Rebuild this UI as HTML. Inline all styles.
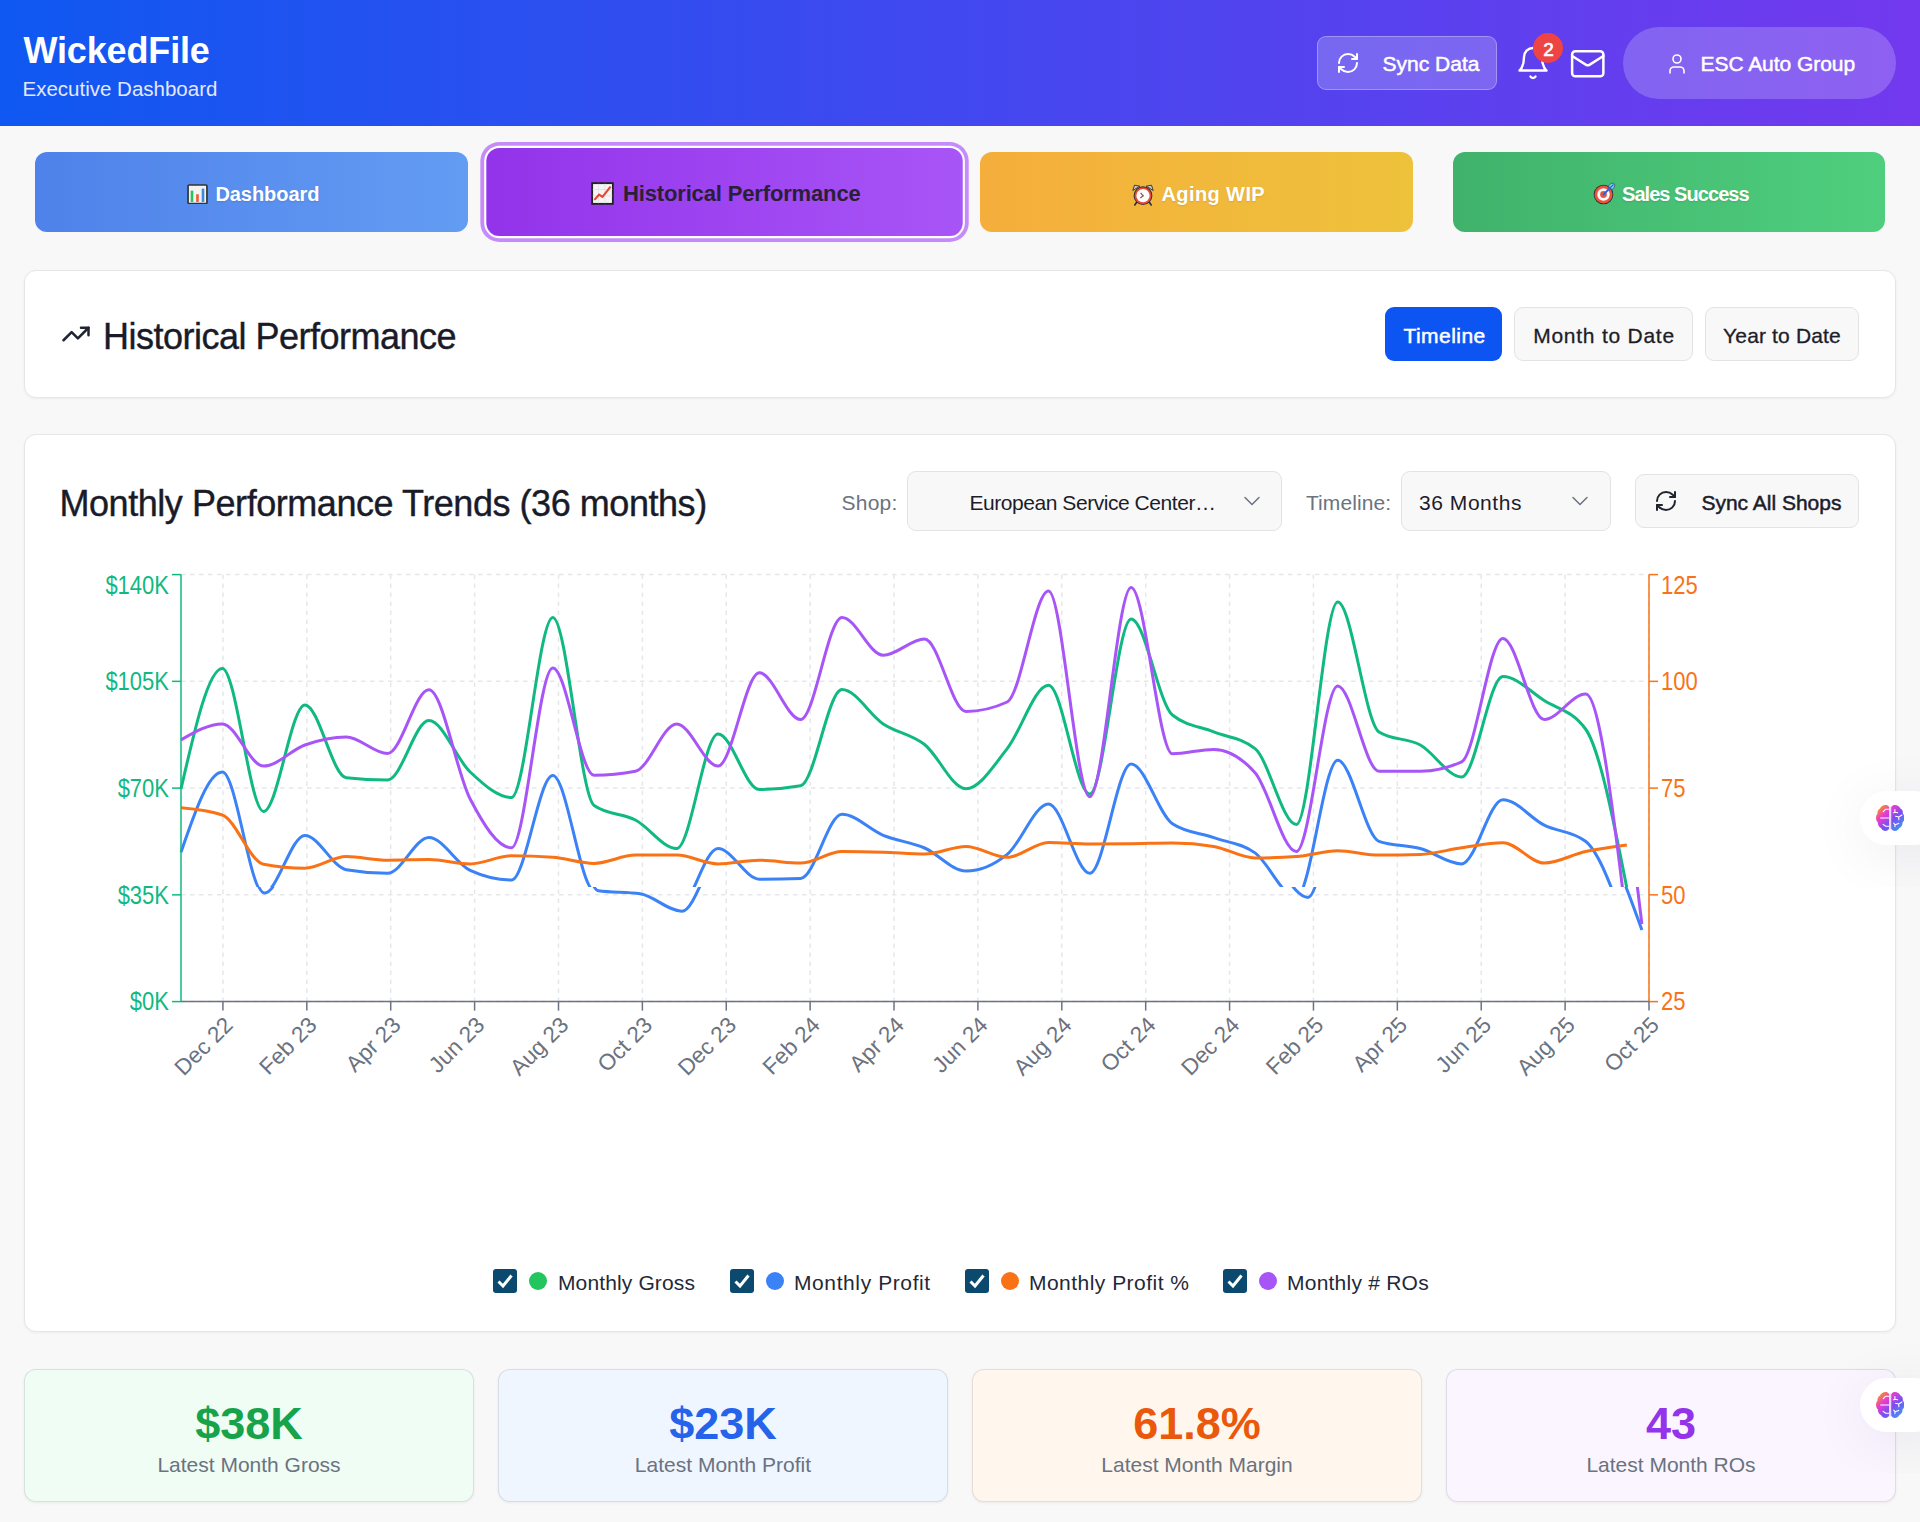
<!DOCTYPE html>
<html><head><meta charset="utf-8">
<style>
*{box-sizing:border-box;margin:0;padding:0}
html,body{width:1920px;height:1522px;overflow:hidden;background:#f8f8f9;font-family:"Liberation Sans",sans-serif;position:relative}
.abs{position:absolute}
.t{position:absolute;white-space:nowrap;line-height:1}
.tk{font-family:"Liberation Sans",sans-serif;font-size:22px}
#hdr{left:0;top:0;width:1920px;height:126px;background:linear-gradient(90deg,#0f58f1 0%,#4248ef 50%,#7339ee 100%)}
.tab{position:absolute;top:152px;width:432.5px;height:80px;border-radius:12px}
.card{position:absolute;left:24px;width:1872px;background:#fff;border:1.5px solid #e6e6e9;border-radius:12px;box-shadow:0 1px 3px rgba(0,0,0,0.05)}
.btn{position:absolute;border-radius:9px;border:1.5px solid #e3e3e6;background:#f8f8f9}
.stat{position:absolute;top:1369px;width:450px;height:133px;border-radius:12px;border:1.5px solid rgba(0,0,20,0.1)!important;box-shadow:0 1px 3px rgba(0,0,0,0.06)}
</style></head>
<body>
<div id="hdr" class="abs"></div>
<div class="t" style="left:23.5px;top:32.5px;font-size:36px;font-weight:700;color:#fff;letter-spacing:-0.15px">WickedFile</div>
<div class="t" style="left:22.5px;top:79px;font-size:20.5px;color:#e3e8ff;letter-spacing:0px">Executive Dashboard</div>

<!-- Sync Data -->
<div class="abs" style="left:1317px;top:36px;width:180px;height:54px;border-radius:9px;background:rgba(255,255,255,0.2);border:1.5px solid rgba(255,255,255,0.3)"></div>
<svg class="abs" style="left:1336px;top:50.5px" width="24" height="24" viewBox="0 0 24 24" fill="none" stroke="#fff" stroke-width="2" stroke-linecap="round" stroke-linejoin="round"><path d="M3 12a9 9 0 0 1 9-9 9.75 9.75 0 0 1 6.74 2.74L21 8"/><path d="M21 3v5h-5"/><path d="M21 12a9 9 0 0 1-9 9 9.75 9.75 0 0 1-6.74-2.74L3 16"/><path d="M8 16H3v5"/></svg>
<div class="t" style="left:1382.5px;top:53px;font-size:21px;color:#fff;letter-spacing:0.02px;-webkit-text-stroke:0.5px #fff">Sync Data</div>
<!-- bell -->
<svg class="abs" style="left:1515px;top:45.2px" width="36" height="36" viewBox="0 0 24 24" fill="none" stroke="#fff" stroke-width="1.6" stroke-linecap="round" stroke-linejoin="round"><path d="M6 8a6 6 0 0 1 12 0c0 7 3 9 3 9H3s3-2 3-9"/><path d="M10.3 21a1.94 1.94 0 0 0 3.4 0"/></svg>
<div class="abs" style="left:1533px;top:33px;width:30px;height:30px;border-radius:50%;background:#ef4444"></div>
<div class="t" style="left:1533.5px;top:39.5px;width:30px;text-align:center;font-size:19px;color:#fff;-webkit-text-stroke:0.6px #fff">2</div>
<!-- mail -->
<svg class="abs" style="left:1568.7px;top:44.6px" width="37.5" height="37.5" viewBox="0 0 24 24" fill="none" stroke="#fff" stroke-width="1.6" stroke-linecap="round" stroke-linejoin="round"><rect width="20" height="16" x="2" y="4" rx="2"/><path d="m22 7-8.97 5.7a1.94 1.94 0 0 1-2.06 0L2 7"/></svg>
<!-- ESC Auto Group -->
<div class="abs" style="left:1623px;top:27px;width:273px;height:72px;border-radius:36px;background:rgba(255,255,255,0.2)"></div>
<svg class="abs" style="left:1665px;top:51.7px" width="24" height="24" viewBox="0 0 24 24" fill="none" stroke="#fff" stroke-width="1.6" stroke-linecap="round" stroke-linejoin="round"><path d="M19 21v-2a4 4 0 0 0-4-4H9a4 4 0 0 0-4 4v2"/><circle cx="12" cy="7" r="4"/></svg>
<div class="t" style="left:1700.5px;top:53px;font-size:21px;color:#fff;letter-spacing:-0.05px;-webkit-text-stroke:0.5px #fff">ESC Auto Group</div>

<!-- Tabs -->
<div class="tab" style="left:35px;background:linear-gradient(90deg,#4f82ea,#639cf3)"></div>
<svg class="abs" style="left:187px;top:183.7px" width="21" height="20.5" viewBox="0 0 20 20" preserveAspectRatio="none"><rect x="1" y="1" width="18" height="18" rx="1" fill="#f3f3f3" stroke="#333" stroke-width="1.6"/><rect x="3.5" y="6.5" width="2.5" height="11" fill="#22c55e"/><rect x="8.7" y="10" width="2.5" height="7.5" fill="#ef5a3c"/><rect x="14" y="4.5" width="2.5" height="13" fill="#3b8be0"/></svg>
<div class="t" style="left:215.4px;top:184px;font-size:20px;font-weight:700;color:#fff;letter-spacing:-0.05px;text-shadow:0 1px 2px rgba(0,0,0,0.1)">Dashboard</div>

<div class="tab" style="left:507.5px;transform:scale(1.1);background:linear-gradient(90deg,#9333ea,#a855f7);box-shadow:0 0 0 2px #fff,0 0 0 5.5px #c58bfa"></div>
<svg class="abs" style="left:591px;top:181.5px" width="23" height="23" viewBox="0 0 20 20"><rect x="1" y="1" width="18" height="18" fill="#f5f5f5" stroke="#222" stroke-width="1.6"/><path d="M1.5 6.5H18.5M1.5 12H18.5M6.5 1.5V18.5M12 1.5V18.5" stroke="#ddd" stroke-width="0.6"/><path d="M3 15.5 L7 11 L10 13 L17 4" stroke="#e8442e" stroke-width="1.8" fill="none"/></svg>
<div class="t" style="left:623px;top:183px;font-size:22px;font-weight:700;color:#2a2036;letter-spacing:-0.15px">Historical Performance</div>

<div class="tab" style="left:980px;background:linear-gradient(90deg,#f5ae3b,#eec23b)"></div>
<svg class="abs" style="left:1132px;top:184px" width="22" height="22" viewBox="0 0 22 22"><path d="M0.8 6.5 L2.5 1.2 L7.8 2.2 Z" fill="#c6cbd2" stroke="#2d2d38" stroke-width="0.9" stroke-linejoin="round"/><path d="M21.2 6.5 L19.5 1.2 L14.2 2.2 Z" fill="#c6cbd2" stroke="#2d2d38" stroke-width="0.9" stroke-linejoin="round"/><path d="M4.5 18.5 L2.8 21 M17.5 18.5 L19.2 21" stroke="#2d2d38" stroke-width="1.6" stroke-linecap="round"/><circle cx="11" cy="11.7" r="9.4" fill="#2d2d38"/><circle cx="11" cy="11.7" r="8.5" fill="#ea4a35"/><circle cx="11" cy="11.7" r="6.6" fill="#fdfdfd"/><path d="M8.6 8.8 L11 11.7 L8.4 14.2" stroke="#4b5563" stroke-width="1.1" fill="none"/><circle cx="11" cy="11.7" r="0.9" fill="#ea4a35"/></svg>
<div class="t" style="left:1161.5px;top:184px;font-size:20px;font-weight:700;color:#fff;letter-spacing:0.4px;text-shadow:0 1px 2px rgba(0,0,0,0.1)">Aging WIP</div>

<div class="tab" style="left:1452.5px;background:linear-gradient(90deg,#40b26b,#4fcf7e)"></div>
<svg class="abs" style="left:1593px;top:182px" width="23" height="23" viewBox="0 0 23 23"><circle cx="10.5" cy="12.5" r="9.8" fill="#2d2d38"/><circle cx="10.5" cy="12.5" r="9" fill="#ea553a"/><circle cx="10.5" cy="12.5" r="6.2" fill="#fff"/><circle cx="10.5" cy="12.5" r="3.4" fill="#ea553a"/><path d="M10.5 12.5 L18.5 4.5" stroke="#2563eb" stroke-width="1.8" stroke-linecap="round"/><path d="M15.5 4.2 C16.5 2 19.5 0.5 21.3 1.7 C22.5 3.5 21 6.5 18.8 7.5 Z" fill="#7dd3fc" stroke="#2d2d38" stroke-width="0.6"/><path d="M17 6 L20.5 2.5" stroke="#2563eb" stroke-width="1.2"/></svg>
<div class="t" style="left:1622px;top:184px;font-size:20px;font-weight:700;color:#fff;letter-spacing:-0.95px;text-shadow:0 1px 2px rgba(0,0,0,0.1)">Sales Success</div>

<!-- Card 1 -->
<div class="card" style="top:270px;height:128px"></div>
<svg class="abs" style="left:60.75px;top:318.8px" width="30" height="30" viewBox="0 0 24 24" fill="none" stroke="#1f2430" stroke-width="2" stroke-linecap="round" stroke-linejoin="round"><polyline points="22 7 13.5 15.5 8.5 10.5 2 17"/><polyline points="16 7 22 7 22 13"/></svg>
<div class="t" style="left:103px;top:319px;font-size:36px;color:#1a1b29;letter-spacing:-0.5px;-webkit-text-stroke:0.4px #1a1b29">Historical Performance</div>
<div class="abs" style="left:1385px;top:307px;width:116.5px;height:54px;border-radius:9px;background:#0d55f2"></div>
<div class="t" style="left:1403.5px;top:324.5px;font-size:21px;color:#fff;letter-spacing:0.45px;-webkit-text-stroke:0.5px #fff">Timeline</div>
<div class="btn" style="left:1514px;top:307px;width:179px;height:54px"></div>
<div class="t" style="left:1533.2px;top:324.5px;font-size:21px;color:#1d1d29;letter-spacing:0.75px;-webkit-text-stroke:0.3px #1d1d29">Month to Date</div>
<div class="btn" style="left:1705px;top:307px;width:154px;height:54px"></div>
<div class="t" style="left:1723.1px;top:324.5px;font-size:21px;color:#1d1d29;letter-spacing:0.15px;-webkit-text-stroke:0.3px #1d1d29">Year to Date</div>

<!-- Card 2 -->
<div class="card" style="top:434px;height:898px"></div>
<div class="t" style="left:59.5px;top:486px;font-size:36px;color:#1a1b29;letter-spacing:-0.45px;-webkit-text-stroke:0.4px #1a1b29">Monthly Performance Trends (36 months)</div>
<div class="t" style="left:841.5px;top:492px;font-size:21px;color:#6b7280;letter-spacing:0.25px">Shop:</div>
<div class="btn" style="left:907px;top:471px;width:375px;height:60px"></div>
<div class="t" style="left:969.5px;top:492px;font-size:21px;color:#1d1d29;letter-spacing:-0.45px">European Service Center…</div>
<svg class="abs" style="left:1239.5px;top:488.7px" width="24" height="24" viewBox="0 0 24 24" fill="none" stroke="#6b7280" stroke-width="1.5" stroke-linecap="round" stroke-linejoin="round"><path d="m5 8.5 7 7 7-7"/></svg>
<div class="t" style="left:1306px;top:492px;font-size:21px;color:#6b7280;letter-spacing:0.07px">Timeline:</div>
<div class="btn" style="left:1401px;top:471px;width:210px;height:60px"></div>
<div class="t" style="left:1419px;top:492px;font-size:21px;color:#1d1d29;letter-spacing:0.55px">36 Months</div>
<svg class="abs" style="left:1567.7px;top:488.7px" width="24" height="24" viewBox="0 0 24 24" fill="none" stroke="#6b7280" stroke-width="1.5" stroke-linecap="round" stroke-linejoin="round"><path d="m5 8.5 7 7 7-7"/></svg>
<div class="btn" style="left:1635px;top:474px;width:224px;height:54px"></div>
<svg class="abs" style="left:1654px;top:488.7px" width="24" height="24" viewBox="0 0 24 24" fill="none" stroke="#1f2430" stroke-width="2" stroke-linecap="round" stroke-linejoin="round"><path d="M3 12a9 9 0 0 1 9-9 9.75 9.75 0 0 1 6.74 2.74L21 8"/><path d="M21 3v5h-5"/><path d="M21 12a9 9 0 0 1-9 9 9.75 9.75 0 0 1-6.74-2.74L3 16"/><path d="M8 16H3v5"/></svg>
<div class="t" style="left:1701.4px;top:492px;font-size:21px;color:#1d1d29;letter-spacing:0px;-webkit-text-stroke:0.5px #1d1d29">Sync All Shops</div>

<svg width="1920" height="1522" style="position:absolute;left:0;top:0">
<defs><clipPath id="ct"><rect x="0" y="0" width="1920" height="887.0"/></clipPath><clipPath id="cb"><rect x="0" y="887.0" width="1920" height="400"/></clipPath></defs>
<g stroke="#e5e7eb" stroke-width="1.5" stroke-dasharray="4.5 4.5" fill="none"><line x1="181.0" y1="574.60" x2="1649.0" y2="574.60"/><line x1="181.0" y1="681.35" x2="1649.0" y2="681.35"/><line x1="181.0" y1="788.10" x2="1649.0" y2="788.10"/><line x1="181.0" y1="894.85" x2="1649.0" y2="894.85"/><line x1="181.0" y1="1001.60" x2="1649.0" y2="1001.60"/><line x1="222.94" y1="574.6" x2="222.94" y2="1001.6"/><line x1="306.83" y1="574.6" x2="306.83" y2="1001.6"/><line x1="390.71" y1="574.6" x2="390.71" y2="1001.6"/><line x1="474.60" y1="574.6" x2="474.60" y2="1001.6"/><line x1="558.49" y1="574.6" x2="558.49" y2="1001.6"/><line x1="642.37" y1="574.6" x2="642.37" y2="1001.6"/><line x1="726.26" y1="574.6" x2="726.26" y2="1001.6"/><line x1="810.14" y1="574.6" x2="810.14" y2="1001.6"/><line x1="894.03" y1="574.6" x2="894.03" y2="1001.6"/><line x1="977.91" y1="574.6" x2="977.91" y2="1001.6"/><line x1="1061.80" y1="574.6" x2="1061.80" y2="1001.6"/><line x1="1145.69" y1="574.6" x2="1145.69" y2="1001.6"/><line x1="1229.57" y1="574.6" x2="1229.57" y2="1001.6"/><line x1="1313.46" y1="574.6" x2="1313.46" y2="1001.6"/><line x1="1397.34" y1="574.6" x2="1397.34" y2="1001.6"/><line x1="1481.23" y1="574.6" x2="1481.23" y2="1001.6"/><line x1="1565.11" y1="574.6" x2="1565.11" y2="1001.6"/><line x1="1649.00" y1="574.6" x2="1649.00" y2="1001.6"/></g>
<path d="M181.00,789.00C194.77,728.70,208.54,668.40,222.31,668.40C236.08,668.40,249.85,811.40,263.62,811.40C277.39,811.40,291.16,704.90,304.93,704.90C318.70,704.90,332.47,776.33,346.24,777.80C360.01,779.27,373.78,780.00,387.55,780.00C401.32,780.00,415.09,720.60,428.86,720.60C442.63,720.60,456.40,759.18,470.17,772.00C483.94,784.82,497.71,797.50,511.48,797.50C525.25,797.50,539.02,617.40,552.79,617.40C566.56,617.40,580.33,795.83,594.10,805.50C607.87,815.17,621.64,812.83,635.41,820.00C649.18,827.17,662.95,848.50,676.72,848.50C690.49,848.50,704.26,734.00,718.03,734.00C731.80,734.00,745.57,789.50,759.34,789.50C773.11,789.50,786.88,788.27,800.65,785.80C814.42,783.33,828.19,689.60,841.96,689.60C855.73,689.60,869.50,714.75,883.27,723.90C897.04,733.05,910.81,733.68,924.58,744.50C938.35,755.32,952.12,788.80,965.89,788.80C979.66,788.80,993.43,765.87,1007.20,748.60C1020.97,731.33,1034.74,685.20,1048.51,685.20C1062.28,685.20,1076.05,793.90,1089.82,793.90C1103.59,793.90,1117.36,618.90,1131.13,618.90C1144.90,618.90,1158.67,703.73,1172.44,715.00C1186.21,726.27,1199.98,726.30,1213.75,731.90C1227.52,737.50,1241.29,737.47,1255.06,748.60C1268.83,759.73,1282.60,824.50,1296.37,824.50C1310.14,824.50,1323.91,602.10,1337.68,602.10C1351.45,602.10,1365.22,723.33,1378.99,732.00C1392.76,740.67,1406.53,737.50,1420.30,745.00C1434.07,752.50,1447.84,777.00,1461.61,777.00C1475.38,777.00,1489.15,676.50,1502.92,676.50C1516.69,676.50,1530.46,691.75,1544.23,700.50C1558.00,709.25,1571.77,710.00,1585.54,729.00C1599.31,748.00,1613.08,818.00,1626.85,888.00" stroke="#10b981" stroke-width="3" fill="none" clip-path="url(#ct)"/>
<path d="M181.00,852.20C194.77,812.10,208.54,772.00,222.31,772.00C236.08,772.00,249.85,893.00,263.62,893.00C277.39,893.00,291.16,835.40,304.93,835.40C318.70,835.40,332.47,867.30,346.24,869.70C360.01,872.10,373.78,873.30,387.55,873.30C401.32,873.30,415.09,837.60,428.86,837.60C442.63,837.60,456.40,864.00,470.17,870.40C483.94,876.80,497.71,880.00,511.48,880.00C525.25,880.00,539.02,775.60,552.79,775.60C566.56,775.60,580.33,888.80,594.10,890.80C607.87,892.80,621.64,891.80,635.41,893.80C649.18,895.80,662.95,911.20,676.72,911.20C690.49,911.20,704.26,848.50,718.03,848.50C731.80,848.50,745.57,879.20,759.34,879.20C773.11,879.20,786.88,878.93,800.65,878.40C814.42,877.87,828.19,814.30,841.96,814.30C855.73,814.30,869.50,829.78,883.27,835.40C897.04,841.02,910.81,842.05,924.58,848.00C938.35,853.95,952.12,871.10,965.89,871.10C979.66,871.10,993.43,865.53,1007.20,854.40C1020.97,843.27,1034.74,804.10,1048.51,804.10C1062.28,804.10,1076.05,873.30,1089.82,873.30C1103.59,873.30,1117.36,764.00,1131.13,764.00C1144.90,764.00,1158.67,814.52,1172.44,823.75C1186.21,832.98,1199.98,832.74,1213.75,837.60C1227.52,842.46,1241.29,842.93,1255.06,852.90C1268.83,862.87,1282.60,897.40,1296.37,897.40C1310.14,897.40,1323.91,760.30,1337.68,760.30C1351.45,760.30,1365.22,836.50,1378.99,841.30C1392.76,846.10,1406.53,844.73,1420.30,848.50C1434.07,852.27,1447.84,863.90,1461.61,863.90C1475.38,863.90,1489.15,799.70,1502.92,799.70C1516.69,799.70,1530.46,818.27,1544.23,825.20C1558.00,832.13,1571.77,830.57,1585.54,841.30C1599.31,852.03,1613.08,891.02,1626.85,930.00" stroke="#3b82f6" stroke-width="3" fill="none" clip-path="url(#ct)"/>
<path d="M181.00,852.20C194.91,812.10,208.83,772.00,222.74,772.00C236.65,772.00,250.57,893.00,264.48,893.00C278.39,893.00,292.31,835.40,306.22,835.40C320.13,835.40,334.05,867.30,347.96,869.70C361.87,872.10,375.79,873.30,389.70,873.30C403.61,873.30,417.53,837.60,431.44,837.60C445.35,837.60,459.27,864.00,473.18,870.40C487.09,876.80,501.01,880.00,514.92,880.00C528.83,880.00,542.75,775.60,556.66,775.60C570.57,775.60,584.49,888.80,598.40,890.80C612.31,892.80,626.23,891.80,640.14,893.80C654.05,895.80,667.97,911.20,681.88,911.20C695.79,911.20,709.71,848.50,723.62,848.50C737.53,848.50,751.45,879.20,765.36,879.20C779.27,879.20,793.19,878.93,807.10,878.40C821.01,877.87,834.93,814.30,848.84,814.30C862.75,814.30,876.67,829.78,890.58,835.40C904.49,841.02,918.41,842.05,932.32,848.00C946.23,853.95,960.15,871.10,974.06,871.10C987.97,871.10,1001.89,865.53,1015.80,854.40C1029.71,843.27,1043.63,804.10,1057.54,804.10C1071.45,804.10,1085.37,873.30,1099.28,873.30C1113.19,873.30,1127.11,764.00,1141.02,764.00C1154.93,764.00,1168.85,814.52,1182.76,823.75C1196.67,832.98,1210.59,832.74,1224.50,837.60C1238.41,842.46,1252.33,842.93,1266.24,852.90C1280.15,862.87,1294.07,897.40,1307.98,897.40C1321.89,897.40,1335.81,760.30,1349.72,760.30C1363.63,760.30,1377.55,836.50,1391.46,841.30C1405.37,846.10,1419.29,844.73,1433.20,848.50C1447.11,852.27,1461.03,863.90,1474.94,863.90C1488.85,863.90,1502.77,799.70,1516.68,799.70C1530.59,799.70,1544.51,818.27,1558.42,825.20C1572.33,832.13,1586.25,830.57,1600.16,841.30C1614.07,852.03,1627.99,891.02,1641.90,930.00" stroke="#3b82f6" stroke-width="3" fill="none" clip-path="url(#cb)"/>
<path d="M181.00,807.70C194.77,808.92,208.54,810.13,222.31,815.00C236.08,819.87,249.85,861.70,263.62,864.30C277.39,866.90,291.16,868.20,304.93,868.20C318.70,868.20,332.47,856.60,346.24,856.60C360.01,856.60,373.78,860.20,387.55,860.20C401.32,860.20,415.09,859.50,428.86,859.50C442.63,859.50,456.40,863.90,470.17,863.90C483.94,863.90,497.71,855.80,511.48,855.80C525.25,855.80,539.02,856.30,552.79,857.30C566.56,858.30,580.33,863.40,594.10,863.40C607.87,863.40,621.64,855.10,635.41,855.10C649.18,855.10,662.95,855.10,676.72,855.10C690.49,855.10,704.26,863.90,718.03,863.90C731.80,863.90,745.57,860.20,759.34,860.20C773.11,860.20,786.88,863.10,800.65,863.10C814.42,863.10,828.19,851.50,841.96,851.50C855.73,851.50,869.50,851.78,883.27,852.20C897.04,852.62,910.81,854.00,924.58,854.00C938.35,854.00,952.12,846.40,965.89,846.40C979.66,846.40,993.43,857.30,1007.20,857.30C1020.97,857.30,1034.74,842.40,1048.51,842.40C1062.28,842.40,1076.05,843.90,1089.82,843.90C1103.59,843.90,1117.36,843.83,1131.13,843.70C1144.90,843.57,1158.67,843.00,1172.44,843.00C1186.21,843.00,1199.98,844.13,1213.75,846.40C1227.52,848.67,1241.29,858.00,1255.06,858.00C1268.83,858.00,1282.60,857.53,1296.37,856.60C1310.14,855.67,1323.91,850.70,1337.68,850.70C1351.45,850.70,1365.22,855.10,1378.99,855.10C1392.76,855.10,1406.53,854.87,1420.30,854.40C1434.07,853.93,1447.84,849.75,1461.61,847.80C1475.38,845.85,1489.15,842.70,1502.92,842.70C1516.69,842.70,1530.46,863.10,1544.23,863.10C1558.00,863.10,1571.77,854.53,1585.54,851.50C1599.31,848.47,1613.08,846.68,1626.85,844.90" stroke="#f97316" stroke-width="3" fill="none" clip-path="url(#ct)"/>
<path d="M181.00,807.70C194.91,808.92,208.83,810.13,222.74,815.00C236.65,819.87,250.57,861.70,264.48,864.30C278.39,866.90,292.31,868.20,306.22,868.20C320.13,868.20,334.05,856.60,347.96,856.60C361.87,856.60,375.79,860.20,389.70,860.20C403.61,860.20,417.53,859.50,431.44,859.50C445.35,859.50,459.27,863.90,473.18,863.90C487.09,863.90,501.01,855.80,514.92,855.80C528.83,855.80,542.75,856.30,556.66,857.30C570.57,858.30,584.49,863.40,598.40,863.40C612.31,863.40,626.23,855.10,640.14,855.10C654.05,855.10,667.97,855.10,681.88,855.10C695.79,855.10,709.71,863.90,723.62,863.90C737.53,863.90,751.45,860.20,765.36,860.20C779.27,860.20,793.19,863.10,807.10,863.10C821.01,863.10,834.93,851.50,848.84,851.50C862.75,851.50,876.67,851.78,890.58,852.20C904.49,852.62,918.41,854.00,932.32,854.00C946.23,854.00,960.15,846.40,974.06,846.40C987.97,846.40,1001.89,857.30,1015.80,857.30C1029.71,857.30,1043.63,842.40,1057.54,842.40C1071.45,842.40,1085.37,843.90,1099.28,843.90C1113.19,843.90,1127.11,843.83,1141.02,843.70C1154.93,843.57,1168.85,843.00,1182.76,843.00C1196.67,843.00,1210.59,844.13,1224.50,846.40C1238.41,848.67,1252.33,858.00,1266.24,858.00C1280.15,858.00,1294.07,857.53,1307.98,856.60C1321.89,855.67,1335.81,850.70,1349.72,850.70C1363.63,850.70,1377.55,855.10,1391.46,855.10C1405.37,855.10,1419.29,854.87,1433.20,854.40C1447.11,853.93,1461.03,849.75,1474.94,847.80C1488.85,845.85,1502.77,842.70,1516.68,842.70C1530.59,842.70,1544.51,863.10,1558.42,863.10C1572.33,863.10,1586.25,854.53,1600.16,851.50C1614.07,848.47,1627.99,846.68,1641.90,844.90" stroke="#f97316" stroke-width="3" fill="none" clip-path="url(#cb)"/>
<path d="M181.00,739.90C194.77,731.90,208.54,723.90,222.31,723.90C236.08,723.90,249.85,766.10,263.62,766.10C277.39,766.10,291.16,749.85,304.93,745.00C318.70,740.15,332.47,737.00,346.24,737.00C360.01,737.00,373.78,753.50,387.55,753.50C401.32,753.50,415.09,689.80,428.86,689.80C442.63,689.80,456.40,772.67,470.17,799.00C483.94,825.33,497.71,847.80,511.48,847.80C525.25,847.80,539.02,668.00,552.79,668.00C566.56,668.00,580.33,775.30,594.10,775.30C607.87,775.30,621.64,773.93,635.41,771.20C649.18,768.47,662.95,724.00,676.72,724.00C690.49,724.00,704.26,766.10,718.03,766.10C731.80,766.10,745.57,672.80,759.34,672.80C773.11,672.80,786.88,719.50,800.65,719.50C814.42,719.50,828.19,617.40,841.96,617.40C855.73,617.40,869.50,655.30,883.27,655.30C897.04,655.30,910.81,639.00,924.58,639.00C938.35,639.00,952.12,711.50,965.89,711.50C979.66,711.50,993.43,708.33,1007.20,702.00C1020.97,695.67,1034.74,591.10,1048.51,591.10C1062.28,591.10,1076.05,796.80,1089.82,796.80C1103.59,796.80,1117.36,587.50,1131.13,587.50C1144.90,587.50,1158.67,753.80,1172.44,753.80C1186.21,753.80,1199.98,749.40,1213.75,749.40C1227.52,749.40,1241.29,757.17,1255.06,772.70C1268.83,788.23,1282.60,851.50,1296.37,851.50C1310.14,851.50,1323.91,685.90,1337.68,685.90C1351.45,685.90,1365.22,771.20,1378.99,771.20C1392.76,771.20,1406.53,771.20,1420.30,771.20C1434.07,771.20,1447.84,768.07,1461.61,761.80C1475.38,755.53,1489.15,638.50,1502.92,638.50C1516.69,638.50,1530.46,719.50,1544.23,719.50C1558.00,719.50,1571.77,694.00,1585.54,694.00C1599.31,694.00,1613.08,809.00,1626.85,924.00" stroke="#a855f7" stroke-width="3" fill="none" clip-path="url(#ct)"/>
<path d="M181.00,739.90C194.91,731.90,208.83,723.90,222.74,723.90C236.65,723.90,250.57,766.10,264.48,766.10C278.39,766.10,292.31,749.85,306.22,745.00C320.13,740.15,334.05,737.00,347.96,737.00C361.87,737.00,375.79,753.50,389.70,753.50C403.61,753.50,417.53,689.80,431.44,689.80C445.35,689.80,459.27,772.67,473.18,799.00C487.09,825.33,501.01,847.80,514.92,847.80C528.83,847.80,542.75,668.00,556.66,668.00C570.57,668.00,584.49,775.30,598.40,775.30C612.31,775.30,626.23,773.93,640.14,771.20C654.05,768.47,667.97,724.00,681.88,724.00C695.79,724.00,709.71,766.10,723.62,766.10C737.53,766.10,751.45,672.80,765.36,672.80C779.27,672.80,793.19,719.50,807.10,719.50C821.01,719.50,834.93,617.40,848.84,617.40C862.75,617.40,876.67,655.30,890.58,655.30C904.49,655.30,918.41,639.00,932.32,639.00C946.23,639.00,960.15,711.50,974.06,711.50C987.97,711.50,1001.89,708.33,1015.80,702.00C1029.71,695.67,1043.63,591.10,1057.54,591.10C1071.45,591.10,1085.37,796.80,1099.28,796.80C1113.19,796.80,1127.11,587.50,1141.02,587.50C1154.93,587.50,1168.85,753.80,1182.76,753.80C1196.67,753.80,1210.59,749.40,1224.50,749.40C1238.41,749.40,1252.33,757.17,1266.24,772.70C1280.15,788.23,1294.07,851.50,1307.98,851.50C1321.89,851.50,1335.81,685.90,1349.72,685.90C1363.63,685.90,1377.55,771.20,1391.46,771.20C1405.37,771.20,1419.29,771.20,1433.20,771.20C1447.11,771.20,1461.03,768.07,1474.94,761.80C1488.85,755.53,1502.77,638.50,1516.68,638.50C1530.59,638.50,1544.51,719.50,1558.42,719.50C1572.33,719.50,1586.25,694.00,1600.16,694.00C1614.07,694.00,1627.99,809.00,1641.90,924.00" stroke="#a855f7" stroke-width="3" fill="none" clip-path="url(#cb)"/>
<line x1="181.0" y1="574.6" x2="181.0" y2="1001.6" stroke="#10b981" stroke-width="1.5"/><line x1="172.0" y1="574.60" x2="181.0" y2="574.60" stroke="#10b981" stroke-width="1.5"/><text transform="translate(169.0,585.60) scale(1,1.13)" x="0" y="0" dy="0.355em" text-anchor="end" fill="#10b981" class="tk">$140K</text><line x1="172.0" y1="681.35" x2="181.0" y2="681.35" stroke="#10b981" stroke-width="1.5"/><text transform="translate(169.0,681.35) scale(1,1.13)" x="0" y="0" dy="0.355em" text-anchor="end" fill="#10b981" class="tk">$105K</text><line x1="172.0" y1="788.10" x2="181.0" y2="788.10" stroke="#10b981" stroke-width="1.5"/><text transform="translate(169.0,788.10) scale(1,1.13)" x="0" y="0" dy="0.355em" text-anchor="end" fill="#10b981" class="tk">$70K</text><line x1="172.0" y1="894.85" x2="181.0" y2="894.85" stroke="#10b981" stroke-width="1.5"/><text transform="translate(169.0,894.85) scale(1,1.13)" x="0" y="0" dy="0.355em" text-anchor="end" fill="#10b981" class="tk">$35K</text><line x1="172.0" y1="1001.60" x2="181.0" y2="1001.60" stroke="#10b981" stroke-width="1.5"/><text transform="translate(169.0,1001.60) scale(1,1.13)" x="0" y="0" dy="0.355em" text-anchor="end" fill="#10b981" class="tk">$0K</text><line x1="1649.0" y1="574.6" x2="1649.0" y2="1001.6" stroke="#f97316" stroke-width="1.5"/><line x1="1649.0" y1="574.60" x2="1658.0" y2="574.60" stroke="#f97316" stroke-width="1.5"/><text transform="translate(1661.0,585.60) scale(1,1.13)" x="0" y="0" dy="0.355em" text-anchor="start" fill="#f97316" class="tk">125</text><line x1="1649.0" y1="681.35" x2="1658.0" y2="681.35" stroke="#f97316" stroke-width="1.5"/><text transform="translate(1661.0,681.35) scale(1,1.13)" x="0" y="0" dy="0.355em" text-anchor="start" fill="#f97316" class="tk">100</text><line x1="1649.0" y1="788.10" x2="1658.0" y2="788.10" stroke="#f97316" stroke-width="1.5"/><text transform="translate(1661.0,788.10) scale(1,1.13)" x="0" y="0" dy="0.355em" text-anchor="start" fill="#f97316" class="tk">75</text><line x1="1649.0" y1="894.85" x2="1658.0" y2="894.85" stroke="#f97316" stroke-width="1.5"/><text transform="translate(1661.0,894.85) scale(1,1.13)" x="0" y="0" dy="0.355em" text-anchor="start" fill="#f97316" class="tk">50</text><line x1="1649.0" y1="1001.60" x2="1658.0" y2="1001.60" stroke="#f97316" stroke-width="1.5"/><text transform="translate(1661.0,1001.60) scale(1,1.13)" x="0" y="0" dy="0.355em" text-anchor="start" fill="#f97316" class="tk">25</text><line x1="181.0" y1="1001.6" x2="1649.0" y2="1001.6" stroke="#6b7280" stroke-width="1.5"/><line x1="222.94" y1="1001.6" x2="222.94" y2="1010.6" stroke="#6b7280" stroke-width="1.5"/><text x="222.94" y="1015.1" transform="rotate(-45 222.94 1015.1)" text-anchor="end" dy="0.71em" fill="#6b7280" class="tk" style="font-size:22.5px">Dec 22</text><line x1="306.83" y1="1001.6" x2="306.83" y2="1010.6" stroke="#6b7280" stroke-width="1.5"/><text x="306.83" y="1015.1" transform="rotate(-45 306.83 1015.1)" text-anchor="end" dy="0.71em" fill="#6b7280" class="tk" style="font-size:22.5px">Feb 23</text><line x1="390.71" y1="1001.6" x2="390.71" y2="1010.6" stroke="#6b7280" stroke-width="1.5"/><text x="390.71" y="1015.1" transform="rotate(-45 390.71 1015.1)" text-anchor="end" dy="0.71em" fill="#6b7280" class="tk" style="font-size:22.5px">Apr 23</text><line x1="474.60" y1="1001.6" x2="474.60" y2="1010.6" stroke="#6b7280" stroke-width="1.5"/><text x="474.60" y="1015.1" transform="rotate(-45 474.60 1015.1)" text-anchor="end" dy="0.71em" fill="#6b7280" class="tk" style="font-size:22.5px">Jun 23</text><line x1="558.49" y1="1001.6" x2="558.49" y2="1010.6" stroke="#6b7280" stroke-width="1.5"/><text x="558.49" y="1015.1" transform="rotate(-45 558.49 1015.1)" text-anchor="end" dy="0.71em" fill="#6b7280" class="tk" style="font-size:22.5px">Aug 23</text><line x1="642.37" y1="1001.6" x2="642.37" y2="1010.6" stroke="#6b7280" stroke-width="1.5"/><text x="642.37" y="1015.1" transform="rotate(-45 642.37 1015.1)" text-anchor="end" dy="0.71em" fill="#6b7280" class="tk" style="font-size:22.5px">Oct 23</text><line x1="726.26" y1="1001.6" x2="726.26" y2="1010.6" stroke="#6b7280" stroke-width="1.5"/><text x="726.26" y="1015.1" transform="rotate(-45 726.26 1015.1)" text-anchor="end" dy="0.71em" fill="#6b7280" class="tk" style="font-size:22.5px">Dec 23</text><line x1="810.14" y1="1001.6" x2="810.14" y2="1010.6" stroke="#6b7280" stroke-width="1.5"/><text x="810.14" y="1015.1" transform="rotate(-45 810.14 1015.1)" text-anchor="end" dy="0.71em" fill="#6b7280" class="tk" style="font-size:22.5px">Feb 24</text><line x1="894.03" y1="1001.6" x2="894.03" y2="1010.6" stroke="#6b7280" stroke-width="1.5"/><text x="894.03" y="1015.1" transform="rotate(-45 894.03 1015.1)" text-anchor="end" dy="0.71em" fill="#6b7280" class="tk" style="font-size:22.5px">Apr 24</text><line x1="977.91" y1="1001.6" x2="977.91" y2="1010.6" stroke="#6b7280" stroke-width="1.5"/><text x="977.91" y="1015.1" transform="rotate(-45 977.91 1015.1)" text-anchor="end" dy="0.71em" fill="#6b7280" class="tk" style="font-size:22.5px">Jun 24</text><line x1="1061.80" y1="1001.6" x2="1061.80" y2="1010.6" stroke="#6b7280" stroke-width="1.5"/><text x="1061.80" y="1015.1" transform="rotate(-45 1061.80 1015.1)" text-anchor="end" dy="0.71em" fill="#6b7280" class="tk" style="font-size:22.5px">Aug 24</text><line x1="1145.69" y1="1001.6" x2="1145.69" y2="1010.6" stroke="#6b7280" stroke-width="1.5"/><text x="1145.69" y="1015.1" transform="rotate(-45 1145.69 1015.1)" text-anchor="end" dy="0.71em" fill="#6b7280" class="tk" style="font-size:22.5px">Oct 24</text><line x1="1229.57" y1="1001.6" x2="1229.57" y2="1010.6" stroke="#6b7280" stroke-width="1.5"/><text x="1229.57" y="1015.1" transform="rotate(-45 1229.57 1015.1)" text-anchor="end" dy="0.71em" fill="#6b7280" class="tk" style="font-size:22.5px">Dec 24</text><line x1="1313.46" y1="1001.6" x2="1313.46" y2="1010.6" stroke="#6b7280" stroke-width="1.5"/><text x="1313.46" y="1015.1" transform="rotate(-45 1313.46 1015.1)" text-anchor="end" dy="0.71em" fill="#6b7280" class="tk" style="font-size:22.5px">Feb 25</text><line x1="1397.34" y1="1001.6" x2="1397.34" y2="1010.6" stroke="#6b7280" stroke-width="1.5"/><text x="1397.34" y="1015.1" transform="rotate(-45 1397.34 1015.1)" text-anchor="end" dy="0.71em" fill="#6b7280" class="tk" style="font-size:22.5px">Apr 25</text><line x1="1481.23" y1="1001.6" x2="1481.23" y2="1010.6" stroke="#6b7280" stroke-width="1.5"/><text x="1481.23" y="1015.1" transform="rotate(-45 1481.23 1015.1)" text-anchor="end" dy="0.71em" fill="#6b7280" class="tk" style="font-size:22.5px">Jun 25</text><line x1="1565.11" y1="1001.6" x2="1565.11" y2="1010.6" stroke="#6b7280" stroke-width="1.5"/><text x="1565.11" y="1015.1" transform="rotate(-45 1565.11 1015.1)" text-anchor="end" dy="0.71em" fill="#6b7280" class="tk" style="font-size:22.5px">Aug 25</text><line x1="1649.00" y1="1001.6" x2="1649.00" y2="1010.6" stroke="#6b7280" stroke-width="1.5"/><text x="1649.00" y="1015.1" transform="rotate(-45 1649.00 1015.1)" text-anchor="end" dy="0.71em" fill="#6b7280" class="tk" style="font-size:22.5px">Oct 25</text>
</svg>

<!-- Legend -->
<div class="abs" style="left:493px;top:1269px;width:24px;height:24px;border-radius:3px;background:#0b4a6e"></div>
<svg class="abs" style="left:493px;top:1269px" width="24" height="24" viewBox="0 0 24 24"><path d="M5.5 12.5 L10 17 L18.5 6.5" stroke="#fff" stroke-width="3" fill="none"/></svg>
<div class="abs" style="left:529px;top:1272px;width:18px;height:18px;border-radius:50%;background:#22c55e"></div>
<div class="t" style="left:558px;top:1272px;font-size:21px;color:#1f2937;letter-spacing:0.13px">Monthly Gross</div>

<div class="abs" style="left:730px;top:1269px;width:24px;height:24px;border-radius:3px;background:#0b4a6e"></div>
<svg class="abs" style="left:730px;top:1269px" width="24" height="24" viewBox="0 0 24 24"><path d="M5.5 12.5 L10 17 L18.5 6.5" stroke="#fff" stroke-width="3" fill="none"/></svg>
<div class="abs" style="left:766px;top:1272px;width:18px;height:18px;border-radius:50%;background:#3b82f6"></div>
<div class="t" style="left:794px;top:1272px;font-size:21px;color:#1f2937;letter-spacing:0.6px">Monthly Profit</div>

<div class="abs" style="left:965px;top:1269px;width:24px;height:24px;border-radius:3px;background:#0b4a6e"></div>
<svg class="abs" style="left:965px;top:1269px" width="24" height="24" viewBox="0 0 24 24"><path d="M5.5 12.5 L10 17 L18.5 6.5" stroke="#fff" stroke-width="3" fill="none"/></svg>
<div class="abs" style="left:1001px;top:1272px;width:18px;height:18px;border-radius:50%;background:#f97316"></div>
<div class="t" style="left:1029px;top:1272px;font-size:21px;color:#1f2937;letter-spacing:0.47px">Monthly Profit %</div>

<div class="abs" style="left:1223px;top:1269px;width:24px;height:24px;border-radius:3px;background:#0b4a6e"></div>
<svg class="abs" style="left:1223px;top:1269px" width="24" height="24" viewBox="0 0 24 24"><path d="M5.5 12.5 L10 17 L18.5 6.5" stroke="#fff" stroke-width="3" fill="none"/></svg>
<div class="abs" style="left:1259px;top:1272px;width:18px;height:18px;border-radius:50%;background:#a855f7"></div>
<div class="t" style="left:1287px;top:1272px;font-size:21px;color:#1f2937;letter-spacing:0.23px">Monthly # ROs</div>

<!-- Stat cards -->
<div class="stat" style="left:24px;background:#effdf4;border-color:#d5f5df"></div>
<div class="t" style="left:24px;width:450px;text-align:center;top:1401px;font-size:45px;font-weight:700;color:#16a34a">$38K</div>
<div class="t" style="left:24px;width:450px;text-align:center;top:1453.5px;font-size:21px;color:#6b7280">Latest Month Gross</div>
<div class="stat" style="left:498px;background:#eff6ff;border-color:#d9e6fb"></div>
<div class="t" style="left:498px;width:450px;text-align:center;top:1401px;font-size:45px;font-weight:700;color:#2563eb">$23K</div>
<div class="t" style="left:498px;width:450px;text-align:center;top:1453.5px;font-size:21px;color:#6b7280">Latest Month Profit</div>
<div class="stat" style="left:972px;background:#fff7ee;border-color:#f9e3cf"></div>
<div class="t" style="left:972px;width:450px;text-align:center;top:1401px;font-size:45px;font-weight:700;color:#ea580c">61.8%</div>
<div class="t" style="left:972px;width:450px;text-align:center;top:1453.5px;font-size:21px;color:#6b7280">Latest Month Margin</div>
<div class="stat" style="left:1446px;background:#faf5ff;border-color:#eadcfb"></div>
<div class="t" style="left:1446px;width:450px;text-align:center;top:1401px;font-size:45px;font-weight:700;color:#9333ea">43</div>
<div class="t" style="left:1446px;width:450px;text-align:center;top:1453.5px;font-size:21px;color:#6b7280">Latest Month ROs</div>

<!-- brain buttons -->
<div class="abs" style="left:1700px;top:680px;width:220px;height:207px;overflow:hidden"><div class="abs" style="left:160px;top:111px;width:100px;height:54px;border-radius:27px;box-shadow:0 10px 60px rgba(20,20,60,0.07)"></div></div>
<div class="abs" style="left:1860px;top:791px;width:80px;height:53.5px;border-radius:27px;background:#fff"></div>
<svg class="abs" style="left:1876px;top:805px" width="28.4" height="26" viewBox="0 0 28.4 26"><defs><linearGradient id="bg1" gradientUnits="userSpaceOnUse" x1="3" y1="1" x2="25" y2="25"><stop offset="0" stop-color="#f59e0b"/><stop offset="0.3" stop-color="#e83ccf"/><stop offset="0.6" stop-color="#7c4ef0"/><stop offset="1" stop-color="#3b9cf2"/></linearGradient></defs><g fill="url(#bg1)"><path d="M13.2 2.2 C12.5 0.6 10.8 0 9.4 0 C7 0 5 1.4 4 3.6 C2 4.6 1.3 6.6 1.5 8.7 C0.3 10 0 11.4 0 13 C0 14.8 0.7 16.2 1.8 17.3 C1.8 20 3.2 22.3 5.2 23.3 C6.2 25 7.6 26 9.4 26 C11.2 26 12.6 25 13.2 23.6 Z"/><path d="M 15.20 2.20 C 15.90 0.60 17.60 0.00 19.00 0.00 C 21.40 0.00 23.40 1.40 24.40 3.60 C 26.40 4.60 27.10 6.60 26.90 8.70 C 28.10 10.00 28.40 11.40 28.40 13.00 C 28.40 14.80 27.70 16.20 26.60 17.30 C 26.60 20.00 25.20 22.30 23.20 23.30 C 22.20 25.00 20.80 26.00 19.00 26.00 C 17.20 26.00 15.80 25.00 15.20 23.60 Z"/></g><g stroke="#fff" stroke-width="1.1" fill="none" stroke-linecap="round" stroke-linejoin="round"><path d="M7.2 6.6 L9.7 4.2 H13.2 M4.7 13 H13.2 M7.1 19.4 L9.7 21.3 H13.2 M18.9 4.5 V7.3 M17.5 7.8 L18.9 7.3 L21.7 7.8 M19.6 11.3 L22.7 12 L26 10.1 M22.7 12 L22.9 14.6 M17.7 18.2 L19.1 19.8 L22.7 18.4 M19.1 19.8 L18.9 21.7"/></g><line x1="14.2" y1="1.5" x2="14.2" y2="24.5" stroke="#e9d8fd" stroke-width="1.6"/></svg>
<div class="abs" style="left:1700px;top:1290px;width:220px;height:183px;overflow:hidden"><div class="abs" style="left:160px;top:88px;width:100px;height:54px;border-radius:27px;box-shadow:0 10px 60px rgba(20,20,60,0.07)"></div></div>
<div class="abs" style="left:1860px;top:1378px;width:80px;height:54px;border-radius:27px;background:#fff"></div>
<svg class="abs" style="left:1876px;top:1391.5px" width="28.4" height="26" viewBox="0 0 28.4 26"><defs><linearGradient id="bg2" gradientUnits="userSpaceOnUse" x1="3" y1="1" x2="25" y2="25"><stop offset="0" stop-color="#f59e0b"/><stop offset="0.3" stop-color="#e83ccf"/><stop offset="0.6" stop-color="#7c4ef0"/><stop offset="1" stop-color="#3b9cf2"/></linearGradient></defs><g fill="url(#bg2)"><path d="M13.2 2.2 C12.5 0.6 10.8 0 9.4 0 C7 0 5 1.4 4 3.6 C2 4.6 1.3 6.6 1.5 8.7 C0.3 10 0 11.4 0 13 C0 14.8 0.7 16.2 1.8 17.3 C1.8 20 3.2 22.3 5.2 23.3 C6.2 25 7.6 26 9.4 26 C11.2 26 12.6 25 13.2 23.6 Z"/><path d="M 15.20 2.20 C 15.90 0.60 17.60 0.00 19.00 0.00 C 21.40 0.00 23.40 1.40 24.40 3.60 C 26.40 4.60 27.10 6.60 26.90 8.70 C 28.10 10.00 28.40 11.40 28.40 13.00 C 28.40 14.80 27.70 16.20 26.60 17.30 C 26.60 20.00 25.20 22.30 23.20 23.30 C 22.20 25.00 20.80 26.00 19.00 26.00 C 17.20 26.00 15.80 25.00 15.20 23.60 Z"/></g><g stroke="#fff" stroke-width="1.1" fill="none" stroke-linecap="round" stroke-linejoin="round"><path d="M7.2 6.6 L9.7 4.2 H13.2 M4.7 13 H13.2 M7.1 19.4 L9.7 21.3 H13.2 M18.9 4.5 V7.3 M17.5 7.8 L18.9 7.3 L21.7 7.8 M19.6 11.3 L22.7 12 L26 10.1 M22.7 12 L22.9 14.6 M17.7 18.2 L19.1 19.8 L22.7 18.4 M19.1 19.8 L18.9 21.7"/></g><line x1="14.2" y1="1.5" x2="14.2" y2="24.5" stroke="#e9d8fd" stroke-width="1.6"/></svg>
</body></html>
